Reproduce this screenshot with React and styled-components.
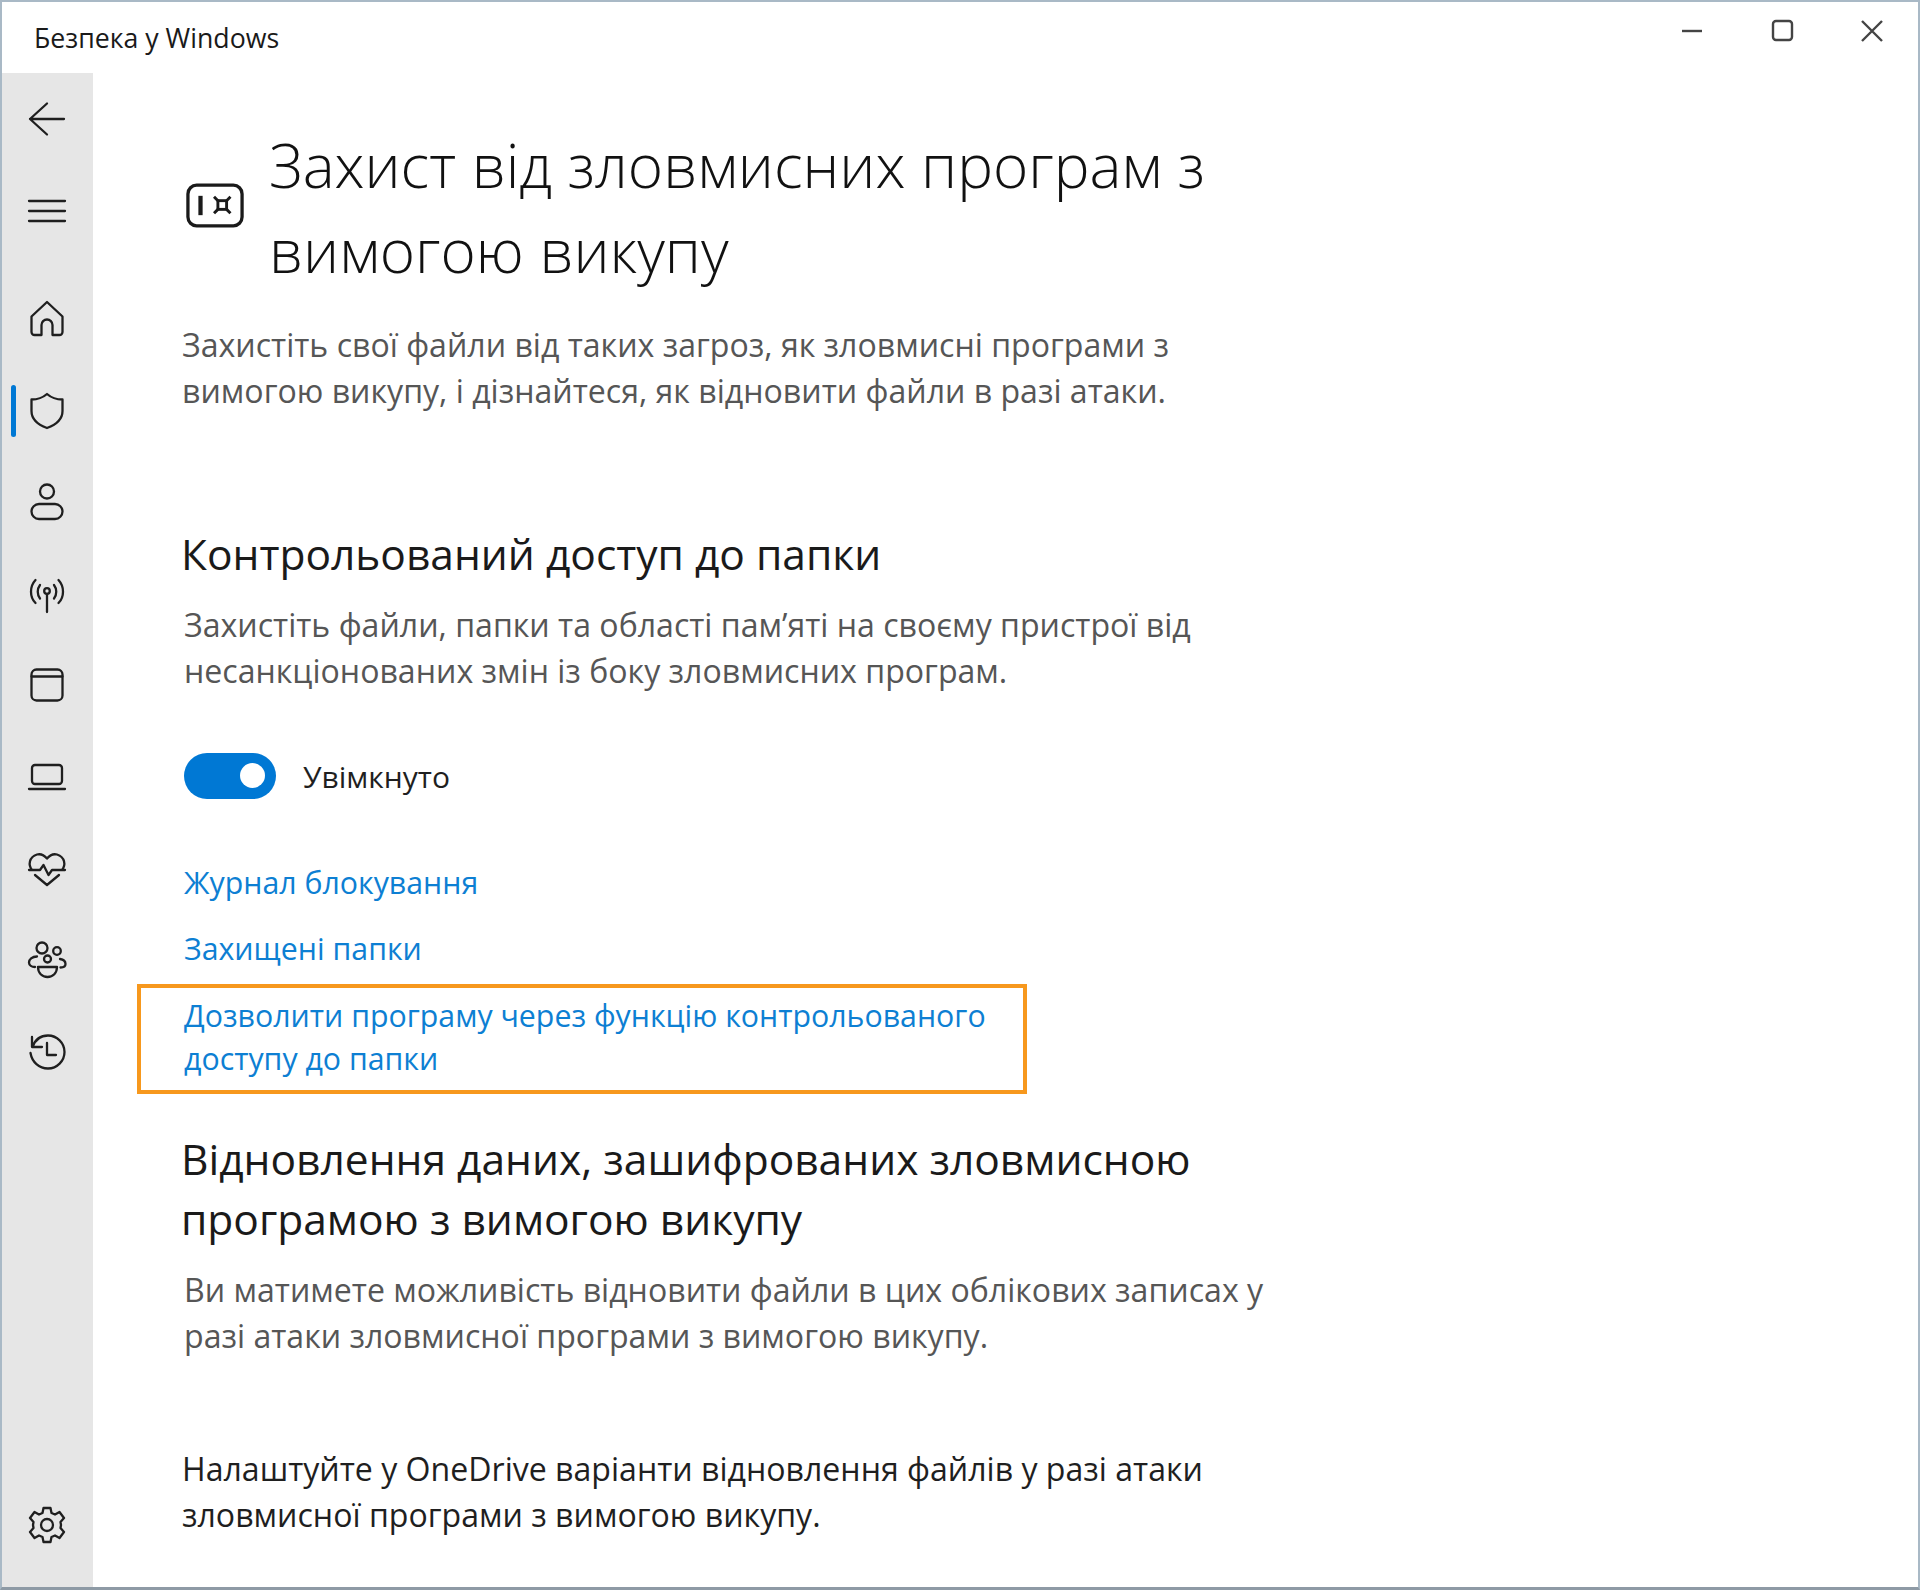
import React from 'react';
import styled, { createGlobalStyle } from 'styled-components';

const GlobalStyle = createGlobalStyle`
    html, body {
        margin: 0;
        padding: 0;
        background: #ffffff;
    }
    * {
        box-sizing: border-box;
    }
`;

const Window = styled.div`
    width: 1920px;
    height: 1590px;
    display: flex;
    flex-direction: column;
    border: 2px solid #a9b9c6;
    border-bottom: 3px solid #8e9aa5;
    background: #ffffff;
    font-family: "Open Sans", "Noto Sans", sans-serif;
    overflow: hidden;
`;

const TitleBar = styled.div`
    height: 71px;
    flex-shrink: 0;
    display: flex;
    align-items: flex-start;
    justify-content: space-between;
`;

const AppName = styled.span`
    margin: 18px 0 0 32px;
    font-size: 26.7px;
    line-height: 36px;
    color: #1a1a1a;
`;

const WindowButtons = styled.div`
    display: flex;
    gap: 50px;
    margin: 10px 26px 0 0;
`;

const WindowButton = styled.svg`
    width: 40px;
    height: 40px;
    fill: none;
    stroke: #444444;
    stroke-width: 2.4;
`;

const Body = styled.div`
    flex: 1;
    display: flex;
    min-height: 0;
`;

const Sidebar = styled.nav`
    width: 91px;
    flex-shrink: 0;
    display: flex;
    flex-direction: column;
    padding: 0 2px 16px 0;
    background: #e6e6e6;
`;

const NavItem = styled.div`
    position: relative;
    height: 91.6px;
    flex-shrink: 0;
    display: flex;
    align-items: center;
    justify-content: center;
    margin-top: ${props => props.$top || '0'};
`;

const ActiveMark = styled.span`
    position: absolute;
    left: 9px;
    top: 20px;
    width: 5px;
    height: 52px;
    border-radius: 3px;
    background: #0078d4;
`;

const Icon = styled.svg`
    width: 40px;
    height: 40px;
    fill: none;
    stroke: #1f1f1f;
    stroke-width: 2.3;
    stroke-linecap: round;
    stroke-linejoin: round;
`;

const Content = styled.main`
    flex: 1;
    padding: 50px 0 0 88px;
`;

const Header = styled.div`
    display: flex;
    align-items: center;
    width: 1040px;
`;

const HeaderIcon = styled.svg`
    width: 58px;
    height: 45px;
    flex-shrink: 0;
    margin: -6px 25px 0 5px;
    fill: none;
    stroke: #1a1a1a;
    stroke-width: 3.4;
`;

const PageTitle = styled.h1`
    margin: 0;
    font-size: 60.2px;
    line-height: 85px;
    font-weight: 300;
    color: #111111;
`;

const Text = styled.p`
    margin: ${props => props.$margin || '0'};
    width: ${props => props.$width || '1060px'};
    padding-left: ${props => props.$indent || '0'};
    font-size: 32.1px;
    line-height: 46px;
    color: ${props => props.$dark ? '#1f1f1f' : '#565656'};
`;

const SectionTitle = styled.h2`
    margin: ${props => props.$margin || '0'};
    width: 1080px;
    font-size: 42.5px;
    line-height: 60px;
    font-weight: 400;
    color: #1a1a1a;
`;

const ToggleRow = styled.div`
    display: flex;
    align-items: center;
    gap: 27px;
    margin: 57px 0 0 3px;
`;

const Toggle = styled.span`
    width: 92px;
    height: 46px;
    padding-right: 11px;
    display: flex;
    align-items: center;
    justify-content: flex-end;
    border-radius: 23px;
    background: #0078d4;
`;

const Knob = styled.span`
    width: 25px;
    height: 25px;
    border-radius: 50%;
    background: #ffffff;
`;

const ToggleLabel = styled.span`
    margin-top: 3px;
    font-size: 30px;
    line-height: 46px;
    color: #1f1f1f;
`;

const Links = styled.div`
    display: flex;
    flex-direction: column;
    margin: 61px 0 0 3px;
`;

const LinkText = styled.a`
    display: block;
    font-size: 30.3px;
    line-height: 43px;
    color: #0d7fd3;
    margin-bottom: ${props => props.$gap || '0'};
`;

const Highlight = styled.div`
    width: 890px;
    height: 110px;
    margin: 0 0 0 -47px;
    padding: 6px 0 0 43px;
    border: 4px solid #f7981d;
`;

const NAV_ICONS = {
    back: <path d="M20 4.500 3 20l17 15.500M3 20h34" />,
    menu: <path d="M2 11h36M2 21h36M2 31h36" />,
    home: <path d="M20 3 4.500 17.500V33a3 3 0 0 0 3 3h7V26a5.500 5.500 0 0 1 11 0v10h7a3 3 0 0 0 3-3V17.500Z" />,
    shield: <path d="M20 3c4 3.500 9.500 5.500 15.500 5.500V20c0 8-6 13.500-15.500 17C10.500 33.500 4.500 28 4.500 20V8.500C10.500 8.500 16 6.500 20 3Z" />,
    person: (
        <>
            <circle cx="20" cy="9.500" r="7" />
            <rect x="4.500" y="22" width="31" height="15" rx="7.500" />
        </>
    ),
    signal: (
        <>
            <circle cx="20" cy="17" r="2.800" />
            <path d="M20 20v18M13 11c-3 4-3 9.500 0 13.500M27 11c3 4 3 9.500 0 13.500M8.500 6c-6 6.500-6 17 0 23M31.500 6c6 6.500 6 17 0 23" />
        </>
    ),
    app: (
        <>
            <rect x="4.500" y="4.500" width="31" height="31" rx="5" />
            <path d="M4.500 11.500h31" />
        </>
    ),
    laptop: (
        <>
            <rect x="5" y="8" width="30" height="19" rx="3" />
            <path d="M2 32h36" />
        </>
    ),
    heart: <path d="M5 21C1 16 2 8 10 5.500c4-1 7.500 1 10 4 2.500-3 6-5 10-4C38 8 39 16 35 21M2 21h11l3.500-5 5 10 3.500-5h13M8 26l12 10 12-10" />,
    family: (
        <>
            <circle cx="15" cy="8" r="5.500" />
            <circle cx="30" cy="11" r="3.800" />
            <circle cx="20.500" cy="19" r="3.500" />
            <path d="M10 16.500c-5 0-8 3-8 6s3 4.500 6 4.500M33 19c3 .500 5.500 2.500 5.500 5s-2 3.500-5 3.500M11 27h19c0 6-4 10-9.500 10S11 33 11 27Z" />
        </>
    ),
    history: <path d="M5 5v10h10M5.500 15C8 8 13.500 3.500 21 3.500c9 0 16.500 7.500 16.500 16.500S30 36.500 21 36.500 5 30 3.500 21M20 11v12h9" />,
    settings: (
        <>
            <circle cx="20" cy="20" r="6" />
            <path d="M16.500 3h7l1 5 3.500 1.500 4.500-2.500 4.500 6-3.500 4 .5 3-.5 3 3.500 4-4.500 6-4.500-2.500L24.500 32l-1 5h-7l-1-5-3.500-1.500L7.500 33 3 27l3.500-4-.5-3 .5-3L3 13l4.500-6L12 9.500 15.500 8Z" />
        </>
    )
};

const NavIcon = ({ name }) => (
    <Icon viewBox="0 0 40 40">{NAV_ICONS[name]}</Icon>
);

const App = () => {
    return (
        <Window>
            <GlobalStyle />
            <TitleBar>
                <AppName>Безпека у Windows</AppName>
                <WindowButtons>
                    <WindowButton viewBox="0 0 40 40"><path d="M10 19h20" /></WindowButton>
                    <WindowButton viewBox="0 0 40 40"><rect x="11" y="9" width="19" height="19" rx="3" /></WindowButton>
                    <WindowButton viewBox="0 0 40 40"><path d="M10 9l20 20M30 9 10 29" /></WindowButton>
                </WindowButtons>
            </TitleBar>

            <Body>
                <Sidebar>
                    <NavItem><NavIcon name="back" /></NavItem>
                    <NavItem><NavIcon name="menu" /></NavItem>
                    <NavItem $top="17px"><NavIcon name="home" /></NavItem>
                    <NavItem><ActiveMark /><NavIcon name="shield" /></NavItem>
                    <NavItem><NavIcon name="person" /></NavItem>
                    <NavItem><NavIcon name="signal" /></NavItem>
                    <NavItem><NavIcon name="app" /></NavItem>
                    <NavItem><NavIcon name="laptop" /></NavItem>
                    <NavItem><NavIcon name="heart" /></NavItem>
                    <NavItem><NavIcon name="family" /></NavItem>
                    <NavItem><NavIcon name="history" /></NavItem>
                    <NavItem $top="auto"><NavIcon name="settings" /></NavItem>
                </Sidebar>

                <Content>
                    <Header>
                        <HeaderIcon viewBox="0 0 60 46">
                            <rect x="2" y="2" width="56" height="42" rx="9" />
                            <path d="M15 13v20" strokeWidth="4.400" />
                            <rect x="33" y="18" width="9" height="9" strokeWidth="3" />
                            <path d="M29 14l4 4M46 14l-4 4M29 31l4-4M46 31l-4-4" strokeWidth="3" />
                        </HeaderIcon>
                        <PageTitle>Захист від зловмисних програм з вимогою викупу</PageTitle>
                    </Header>

                    <Text $margin="29px 0 0" $indent="1px">Захистіть свої файли від таких загроз, як зловмисні програми з вимогою викупу, і дізнайтеся, як відновити файли в разі атаки.</Text>

                    <SectionTitle $margin="110px 0 0">Контрольований доступ до папки</SectionTitle>
                    <Text $margin="18px 0 0" $indent="3px">Захистіть файли, папки та області пам’яті на своєму пристрої від несанкціонованих змін із боку зловмисних програм.</Text>

                    <ToggleRow>
                        <Toggle><Knob /></Toggle>
                        <ToggleLabel>Увімкнуто</ToggleLabel>
                    </ToggleRow>

                    <Links>
                        <LinkText $gap="23px">Журнал блокування</LinkText>
                        <LinkText $gap="14px">Захищені папки</LinkText>
                        <Highlight>
                            <LinkText>Дозволити програму через функцію контрольованого доступу до папки</LinkText>
                        </Highlight>
                    </Links>

                    <SectionTitle $margin="35px 0 0">Відновлення даних, зашифрованих зловмисною програмою з вимогою викупу</SectionTitle>
                    <Text $margin="18px 0 0" $indent="3px" $width="1110px">Ви матимете можливість відновити файли в цих облікових записах у разі атаки зловмисної програми з вимогою викупу.</Text>

                    <Text $margin="87px 0 0" $dark $indent="1px">Налаштуйте у OneDrive варіанти відновлення файлів у разі атаки зловмисної програми з вимогою викупу.</Text>
                </Content>
            </Body>
        </Window>
    );
};

export default App;
